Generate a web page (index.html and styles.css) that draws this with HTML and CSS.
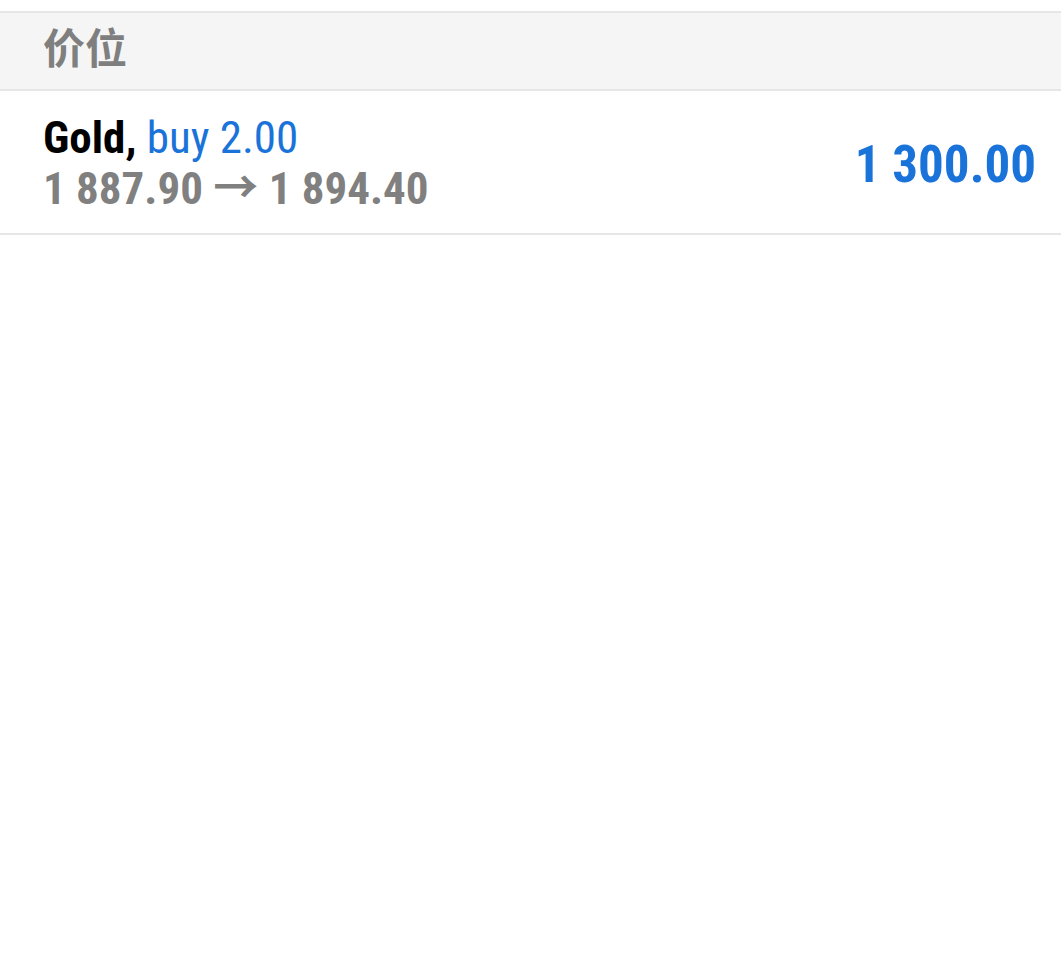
FILE: index.html
```html
<!DOCTYPE html>
<html>
<head>
  <title>价位</title>
  <link rel="stylesheet" href="styles.css">
</head>
<body>
  <div class="section-head">价位</div>

  <ul class="order-list">
    <li class="order">
      <div class="order-info">
        <div class="order-title">
          <span class="symbol">Gold,</span> <span class="side">buy 2.00</span>
        </div>
        <div class="order-prices">1 887.90 &rarr; 1 894.40</div>
      </div>
      <div class="order-profit">1 300.00</div>
    </li>
  </ul>
</body>
</html>
```

FILE: styles.css
```css
body {
  margin: 0;
  padding-top: 11px;
  background-color: #ffffff;
  font-family: "Roboto Condensed", Roboto, "Noto Sans CJK SC", sans-serif;
}

.section-head {
  height: 80px;
  line-height: 65px;
  padding-left: 43px;
  background-color: #f5f5f5;
  border-top: 2px solid #e6e6e6;
  border-bottom: 2px solid #e6e6e6;
  color: #7f7f7f;
  font-family: "Noto Sans CJK SC", sans-serif;
  font-size: 42px;
  font-weight: bold;
  box-sizing: border-box;
}

.order-list {
  list-style-type: none;
  margin: 0;
  padding: 0;
}

.order {
  display: flex;
  justify-content: space-between;
  align-items: center;
  height: 142px;
  padding: 0 25px 0 43px;
  border-bottom: 2px solid #e6e6e6;
}

.order-info {
  line-height: 51px;
  padding-top: 2px;
}

.order-title {
  font-size: 45px;
}

.symbol {
  color: #000000;
  font-weight: bold;
}

.side {
  color: #1a73d9;
}

.order-prices {
  color: #808080;
  font-size: 45px;
  font-weight: bold;
}

.order-profit {
  color: #1a73d9;
  font-size: 51px;
  font-weight: bold;
  padding-top: 4px;
}
```
